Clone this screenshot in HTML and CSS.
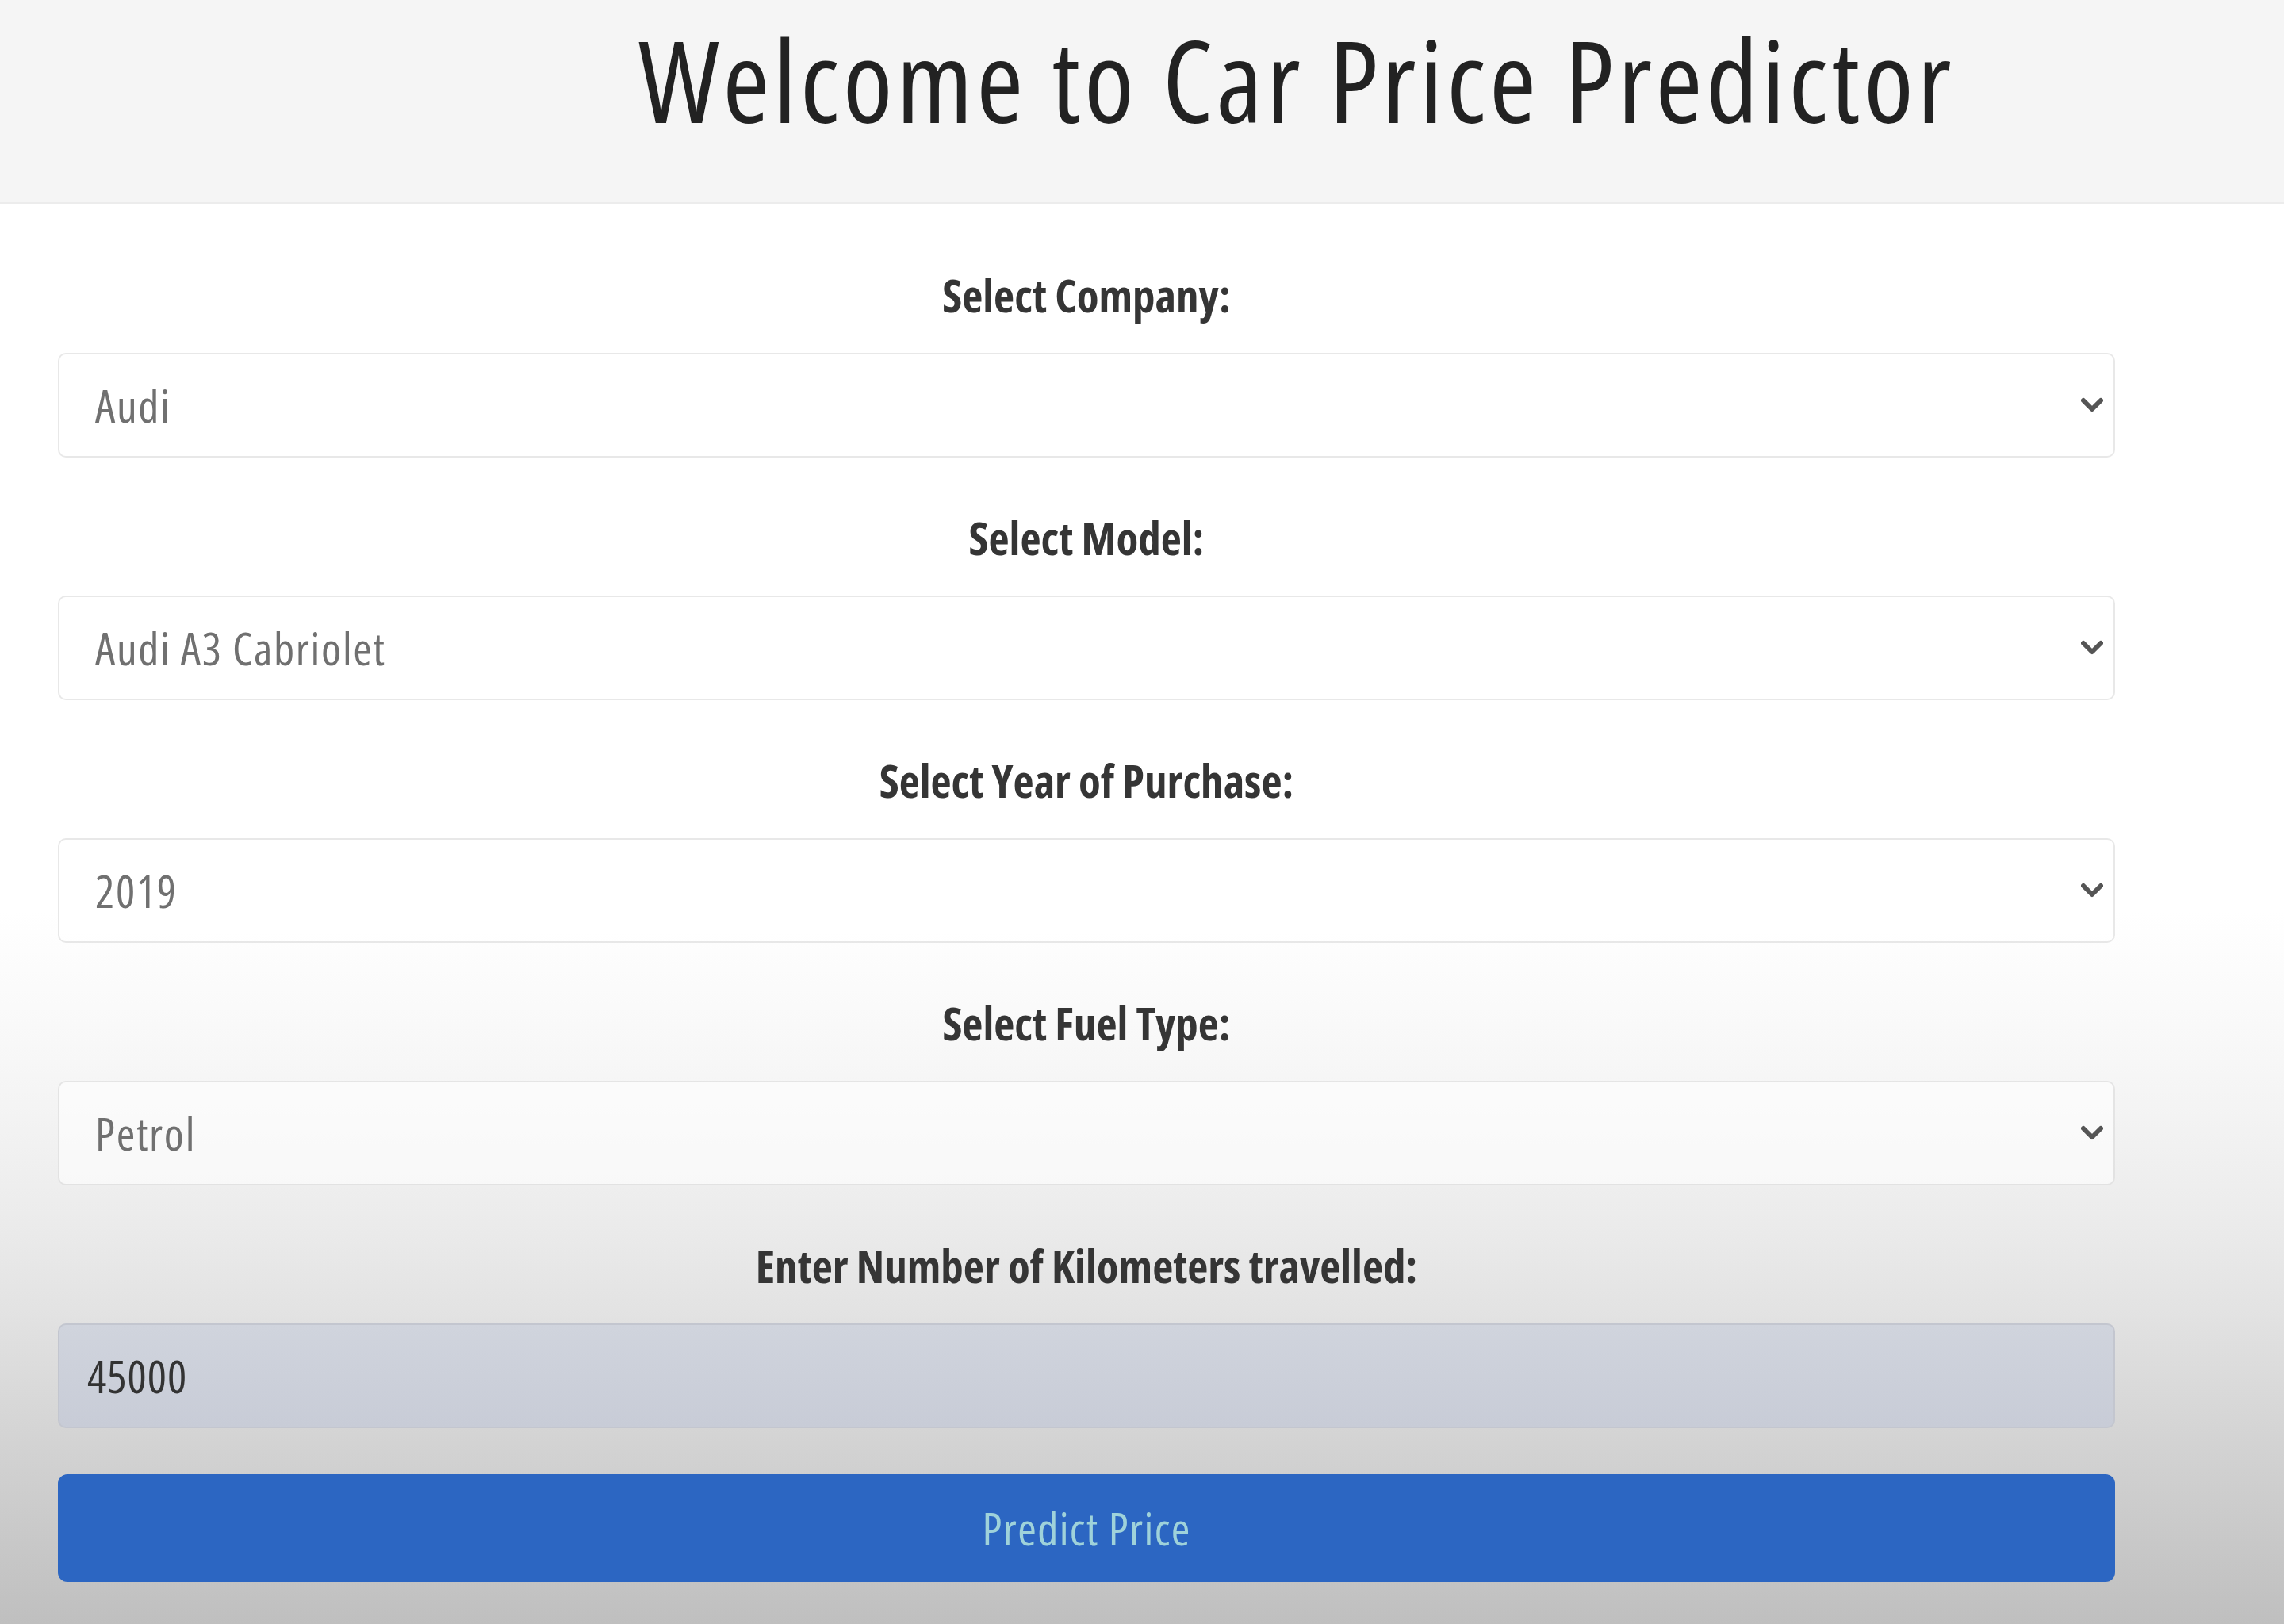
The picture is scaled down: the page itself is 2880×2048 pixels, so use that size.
FILE: index.html
```html
<!DOCTYPE html>
<html lang="en">
<head>
<meta charset="utf-8">
<title>Car Price Predictor</title>
<link rel="stylesheet" href="styles.css">
</head>
<body>
<header class="topbar">
  <h1 class="title">Welcome to Car Price Predictor</h1>
</header>
<main class="container">
  <form class="predict-form">
    <div class="group">
      <label class="label" for="company">Select Company:</label>
      <div class="select-wrap">
        <select id="company" class="control select"><option>Audi</option></select>
        <svg class="chevron" viewBox="0 0 28 20" width="28" height="20"><path d="M3 4 L14 15 L25 4" fill="none" stroke="#555" stroke-width="6" stroke-linecap="round" stroke-linejoin="round"/></svg>
      </div>
    </div>
    <div class="group">
      <label class="label" for="model">Select Model:</label>
      <div class="select-wrap">
        <select id="model" class="control select"><option>Audi A3 Cabriolet</option></select>
        <svg class="chevron" viewBox="0 0 28 20" width="28" height="20"><path d="M3 4 L14 15 L25 4" fill="none" stroke="#555" stroke-width="6" stroke-linecap="round" stroke-linejoin="round"/></svg>
      </div>
    </div>
    <div class="group">
      <label class="label" for="year">Select Year of Purchase:</label>
      <div class="select-wrap">
        <select id="year" class="control select"><option>2019</option></select>
        <svg class="chevron" viewBox="0 0 28 20" width="28" height="20"><path d="M3 4 L14 15 L25 4" fill="none" stroke="#555" stroke-width="6" stroke-linecap="round" stroke-linejoin="round"/></svg>
      </div>
    </div>
    <div class="group">
      <label class="label" for="fuel">Select Fuel Type:</label>
      <div class="select-wrap">
        <select id="fuel" class="control select"><option>Petrol</option></select>
        <svg class="chevron" viewBox="0 0 28 20" width="28" height="20"><path d="M3 4 L14 15 L25 4" fill="none" stroke="#555" stroke-width="6" stroke-linecap="round" stroke-linejoin="round"/></svg>
      </div>
    </div>
    <div class="group">
      <label class="label" for="km">Enter Number of Kilometers travelled:</label>
      <input id="km" class="control input" type="text" value="45000">
    </div>
    <button type="button" class="btn">Predict Price</button>
  </form>
</main>
</body>
</html>
```
FILE: styles.css
```css
html {
  background: #ffffff;
}
body {
  margin: 0;
  min-height: 2048px;
  font-family: "Open Sans", "Noto Sans", sans-serif;
  font-stretch: 75%;
  background: linear-gradient(to bottom,
    #ffffff 0px,
    #ffffff 1150px,
    #f7f7f7 1340px,
    #ececec 1530px,
    #e3e3e3 1650px,
    #d3d3d3 1820px,
    #bfbfbf 2048px);
  background-repeat: no-repeat;
  background-size: 100% 2048px;
}
.topbar {
  box-sizing: border-box;
  height: 257px;
  padding: 14px 0 0 390px;
  background: #f5f5f5;
  border-bottom: 2px solid #ececec;
}
.title {
  margin: 0;
  text-align: center;
  font-size: 143px;
  line-height: 172px;
  font-weight: 400;
  font-stretch: 75%;
  letter-spacing: 4.6px;
  color: #222222;
}
.container {
  width: 2594px;
  margin: 0 0 0 73px;
  padding-top: 72px;
}
.predict-form {
  display: flex;
  flex-direction: column;
}
.group {
  display: flex;
  flex-direction: column;
  margin-bottom: 58px;
}
.label {
  display: block;
  text-align: center;
  font-size: 57px;
  line-height: 86px;
  font-weight: 700;
  font-stretch: 75%;
  color: #353535;
  margin-bottom: 30px;
}
.select-wrap {
  position: relative;
}
.control {
  box-sizing: border-box;
  width: 100%;
  height: 132px;
  margin: 0;
  font-family: "Open Sans", "Noto Sans", sans-serif;
  font-stretch: 75%;
  font-size: 57px;
  border-radius: 10px;
  outline: none;
}
.select {
  -webkit-appearance: none;
  appearance: none;
  padding: 0 80px 0 45px;
  background: rgba(255, 255, 255, 0.6);
  border: 2px solid rgba(0, 0, 0, 0.09);
  color: #707070;
  letter-spacing: 1.7px;
}
.chevron {
  position: absolute;
  right: 15px;
  top: 50%;
  margin-top: -10px;
  pointer-events: none;
}
.input {
  padding: 0 35px;
  background: linear-gradient(to bottom, #d0d4dd, #c8ccd7);
  border: 2px solid #c3c6cf;
  color: #333;
  letter-spacing: 1px;
}
.btn {
  box-sizing: border-box;
  width: 100%;
  height: 136px;
  border: none;
  border-radius: 12px;
  background: #2c66c2;
  color: #9fd2da;
  font-family: "Open Sans", "Noto Sans", sans-serif;
  font-stretch: 75%;
  font-size: 57px;
  letter-spacing: 1.4px;
  cursor: pointer;
}
```
